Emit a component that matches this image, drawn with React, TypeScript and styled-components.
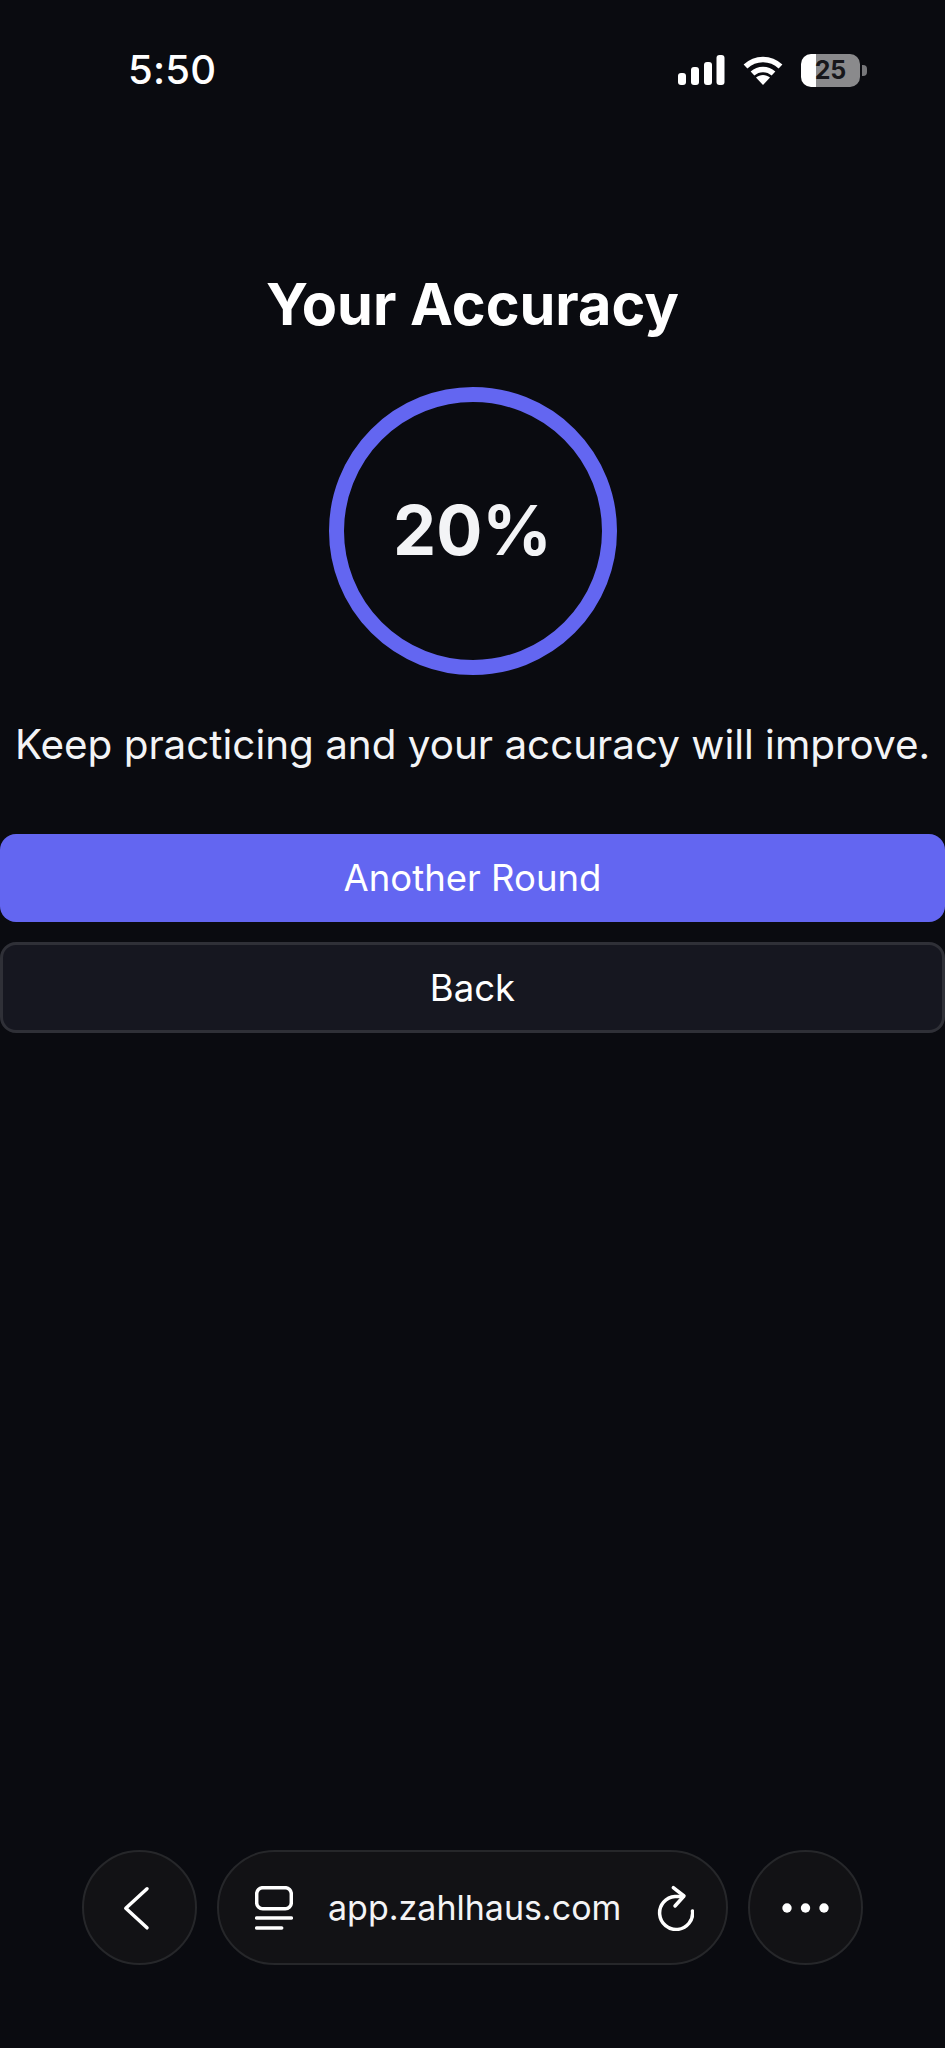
import React from "react";
import styled, { createGlobalStyle } from "styled-components";

const Global = createGlobalStyle`
  html, body { margin: 0; padding: 0; background: #0a0b10; }
  * { box-sizing: border-box; }
`;

const Screen = styled.div`
  width: 945px;
  height: 2048px;
  display: flex;
  flex-direction: column;
  background: #0a0b10;
  color: #fff;
  font-family: Inter, "Liberation Sans", sans-serif;
  overflow: hidden;
`;

const StatusBar = styled.header`
  height: 140px;
  flex: none;
  display: flex;
  justify-content: space-between;
  align-items: flex-start;
  padding: 47px 78px 0 128px;
`;

const Time = styled.span`
  font-size: 40px;
  line-height: 46px;
  font-weight: 550;
  letter-spacing: 0.2px;
  color: #fff;
`;

const StatusIcons = styled.div`
  display: flex;
  align-items: center;
  gap: 18px;
  height: 46px;
`;

const Battery = styled.div`
  width: 59px;
  height: 33px;
  border-radius: 10px;
  background: linear-gradient(90deg, #fff 0, #fff 15px, #8a8a8c 15px, #8a8a8c 100%);
  display: flex;
  align-items: center;
  justify-content: center;
  font-size: 25px;
  font-weight: 700;
  color: #17171b;
`;

const BatteryWrap = styled.div`
  display: flex;
  align-items: center;
  gap: 2px;
`;

const BatteryNub = styled.div`
  width: 5px;
  height: 11px;
  border-radius: 0 4px 4px 0;
  background: #77777a;
`;

const Main = styled.main`
  flex: 1;
  display: flex;
  flex-direction: column;
  align-items: center;
  padding-top: 128px;
`;

const Title = styled.h1`
  margin: 0;
  font-size: 57.6px;
  line-height: 72px;
  font-weight: 700;
  color: #fff;
`;

const Ring = styled.div`
  margin-top: 47px;
  width: 288px;
  height: 288px;
  border-radius: 50%;
  border: 15px solid #6366f1;
  display: flex;
  align-items: center;
  justify-content: center;
`;

const Percent = styled.span`
  font-size: 68.5px;
  line-height: 80px;
  font-weight: 700;
  color: #f3f4f6;
`;

const Message = styled.p`
  margin: 42px 0 0;
  font-size: 40.4px;
  line-height: 56px;
  font-weight: 400;
  white-space: nowrap;
  color: #f3f4f6;
`;

const Buttons = styled.div`
  margin-top: 61px;
  width: 100%;
  display: flex;
  flex-direction: column;
  gap: 20px;
`;

const Button = styled.button<{ $primary?: boolean }>`
  width: 100%;
  height: ${(p) => (p.$primary ? "88px" : "91px")};
  border-radius: 16px;
  border: ${(p) => (p.$primary ? "none" : "3px solid #2f3037")};
  background: ${(p) => (p.$primary ? "#6366f1" : "#161720")};
  color: #fff;
  font-family: inherit;
  font-size: 36.5px;
  font-weight: 400;
  padding: 0;
`;

const Nav = styled.nav`
  flex: none;
  display: flex;
  gap: 20px;
  padding: 0 82px 83px 82px;
`;

const RoundButton = styled.div`
  width: 115px;
  height: 115px;
  flex: none;
  border-radius: 50%;
  border: 2px solid #26272a;
  background: #121215;
  display: flex;
  align-items: center;
  justify-content: center;
`;

const AddressPill = styled.div`
  flex: 1;
  height: 115px;
  border-radius: 58px;
  border: 2px solid #26272a;
  background: #121215;
  display: flex;
  align-items: center;
  padding: 0 32px 0 36px;
`;

const Url = styled.span`
  flex: 1;
  margin-left: 35px;
  font-size: 34px;
  font-weight: 400;
  color: #f4f4f5;
  white-space: nowrap;
`;

export default function App() {
  return (
    <Screen>
      <Global />
      <StatusBar>
        <Time>5:50</Time>
        <StatusIcons>
          <svg width="47" height="30" viewBox="0 0 47 30" fill="#fff">
            <rect x="0" y="18" width="8" height="12" rx="3" />
            <rect x="13" y="12" width="8" height="18" rx="3" />
            <rect x="26" y="7" width="8" height="23" rx="3" />
            <rect x="38.500" y="0" width="8" height="30" rx="3" />
          </svg>
          <svg width="40" height="29" viewBox="0 0 40 29" fill="none" stroke="#fff" strokeWidth="5.500">
            <path d="M2.500 10.500C12.500 1 27.500 1 37.500 10.500" />
            <path d="M9.500 17.500C15.500 12 24.500 12 30.500 17.500" />
            <path d="M13 21.500C17 18 23 18 27 21.500L20 29Z" fill="#fff" stroke="none" />
          </svg>
          <BatteryWrap>
            <Battery>25</Battery>
            <BatteryNub />
          </BatteryWrap>
        </StatusIcons>
      </StatusBar>
      <Main>
        <Title>Your Accuracy</Title>
        <Ring>
          <Percent>20%</Percent>
        </Ring>
        <Message>Keep practicing and your accuracy will improve.</Message>
        <Buttons>
          <Button $primary>Another Round</Button>
          <Button>Back</Button>
        </Buttons>
      </Main>
      <Nav>
        <RoundButton>
          <svg width="34" height="48" viewBox="0 0 34 48" fill="none" stroke="#fff" strokeWidth="3.500" strokeLinecap="round" strokeLinejoin="round">
            <path d="M24 4.800 2.800 24.300 24 43.800" />
          </svg>
        </RoundButton>
        <AddressPill>
          <svg width="38" height="44" viewBox="0 0 38 44" fill="none" stroke="#fff" strokeWidth="3.500" strokeLinecap="round">
            <rect x="1.700" y="1.700" width="34.600" height="21" rx="6" />
            <path d="M1.700 32h34.600" />
            <path d="M1.700 42h25" />
          </svg>
          <Url>app.zahlhaus.com</Url>
          <svg width="38" height="46" viewBox="0 0 38 46" fill="none" stroke="#fff" strokeWidth="3.500" strokeLinecap="round" strokeLinejoin="round">
            <path d="M27 11.500H19A16.500 16.500 0 1 0 36.500 26" />
            <path d="M17.300 2.700 28 11 19 21" />
          </svg>
        </AddressPill>
        <RoundButton>
          <svg width="47" height="10" viewBox="0 0 47 10" fill="#fff">
            <circle cx="5" cy="5" r="4.700" />
            <circle cx="23.500" cy="5" r="4.700" />
            <circle cx="42" cy="5" r="4.700" />
          </svg>
        </RoundButton>
      </Nav>
    </Screen>
  );
}
